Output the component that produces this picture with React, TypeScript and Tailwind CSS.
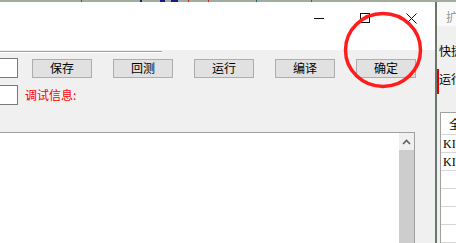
const BUTTONS = ["保存", "回测", "运行", "编译", "确定"];

function CaptionButtons() {
  return (
    <div className="flex h-[30px] mt-[1px]">
      <div className="w-[46px] flex items-center justify-center">
        <svg width="11" height="11" viewBox="0 0 11 11">
          <path d="M0 5.5H10" stroke="#111" strokeWidth="1" />
        </svg>
      </div>
      <div className="w-[46px] flex items-center justify-center">
        <svg width="11" height="11" viewBox="0 0 11 11">
          <rect x="0.5" y="0.5" width="9" height="9" fill="none" stroke="#111" strokeWidth="1" />
        </svg>
      </div>
      <div className="w-[46px] flex items-center justify-center">
        <svg width="11" height="11" viewBox="0 0 11 11">
          <path d="M0.5 0.5L10.5 10.5M10.5 0.5L0.5 10.5" stroke="#111" strokeWidth="1" />
        </svg>
      </div>
    </div>
  );
}

function MainWindow() {
  return (
    <div className="w-[435px] flex flex-col">
      {/* title bar */}
      <div className="h-[48px] bg-white flex justify-end items-start pr-[1px]">
        <CaptionButtons />
      </div>

      {/* client */}
      <div className="flex-1 bg-[#f0f0f0] flex flex-col">
        <div className="h-[2px] w-[162px] mt-[1px] border-t border-[#a0a0a0] bg-white" />

        <div className="flex items-center mt-[5px] h-[20px]">
          <div className="w-[18px] h-[20px] bg-white border border-l-0 border-[#7a7a7a]" />
          <div className="flex gap-[21px] ml-[14px]">
            {BUTTONS.map((b) => (
              <div
                key={b}
                className="w-[60px] h-[19px] bg-[#e1e1e1] border border-[#adadad] flex items-center justify-center text-[12px] text-black leading-none"
              >
                {b}
              </div>
            ))}
          </div>
        </div>

        <div className="flex items-center mt-[7px] h-[20px]">
          <div className="w-[18px] h-[20px] bg-white border border-l-0 border-[#7a7a7a]" />
          <span className="ml-[7px] text-[12px] text-[#ff0000] leading-none">调试信息:</span>
        </div>

        <div className="flex mt-[27px] flex-1">
          <div className="w-[415px] bg-white border-t border-r border-[#a0a0a0] flex justify-end">
            <div className="w-[15px] flex flex-col">
              <div className="h-[17px] bg-[#f0f0f0] flex items-center justify-center">
                <svg width="9" height="6" viewBox="0 0 9 6">
                  <path d="M1 5L4.5 1.5L8 5" fill="none" stroke="#606060" strokeWidth="1.6" />
                </svg>
              </div>
              <div className="flex-1 bg-[#cdcdcd]" />
            </div>
          </div>
        </div>
      </div>
    </div>
  );
}

function SideWindow() {
  const rows = ["KI", "KI", "", "", "", ""];
  return (
    <div className="flex-1 flex flex-col bg-[#f0f0f0] overflow-hidden">
      <div className="h-[30px] bg-[#f9f9f9] pl-[9px] pt-[9px] text-[12px] text-[#9a9a9a] leading-none whitespace-nowrap">
        扩展
      </div>
      <div className="relative flex-1">
        <div className="absolute left-0 top-[43px] w-[2px] h-[25px] bg-[#e00000]" />
        <div className="pl-[2px] pt-[19px] text-[12px] text-black leading-none whitespace-nowrap">快捷</div>
        <div className="pl-[2px] pt-[16px] text-[12px] text-black leading-none whitespace-nowrap">运行</div>
        <div className="ml-[3px] mt-[27px] w-[40px] bg-white border-l border-t border-[#a0a0a0]">
          <div className="h-[22px] border-b border-[#d6d6d6] pl-[7px] pt-[5px] text-[12px] leading-none whitespace-nowrap border-l border-l-white">
            全部
          </div>
          {rows.map((r, i) => (
            <div
              key={i}
              className="h-[18px] border-b border-[#d6d6d6] pl-[2px] flex items-center text-[12px] whitespace-nowrap font-['Liberation_Serif',serif]"
            >
              {r}
            </div>
          ))}
        </div>
      </div>
    </div>
  );
}

export default function App() {
  return (
    <div className="relative w-[456px] h-[243px] overflow-hidden bg-[#f0f0f0] font-['Noto_Sans_CJK_SC','Noto_Sans',sans-serif]">
      {/* desktop strip behind the windows */}
      <div className="relative h-[2px] bg-[#a3ad9f]">
        <span className="absolute left-[81px] top-0 w-[1px] h-[2px] bg-[#e02020]" />
        <span className="absolute left-[140px] top-0 w-[2px] h-[2px] bg-[#1a1a80]" />
        <span className="absolute left-[160px] top-0 w-[5px] h-[2px] bg-[#1a1a80]" />
        <span className="absolute left-[171px] top-0 w-[7px] h-[2px] bg-[#1a1a80]" />
        <span className="absolute left-[188px] top-0 w-[1px] h-[2px] bg-[#e02020]" />
        <span className="absolute left-[208px] top-0 w-[1px] h-[2px] bg-[#e02020]" />
        <span className="absolute left-[256px] top-0 w-[1px] h-[2px] bg-[#107070]" />
        <span className="absolute left-[311px] top-0 w-[1px] h-[2px] bg-[#e02020]" />
      </div>

      <div className="flex h-[241px]">
        <MainWindow />
        <div className="w-[2px] bg-[#6b766b]" />
        <SideWindow />
      </div>

      {/* annotation circle */}
      <svg className="absolute left-[343px] top-[11px]" width="80" height="78" viewBox="0 0 80 78">
        <ellipse cx="40" cy="39" rx="37.5" ry="36.5" fill="none" stroke="#ff1c1c" strokeWidth="3.5" />
      </svg>
    </div>
  );
}
